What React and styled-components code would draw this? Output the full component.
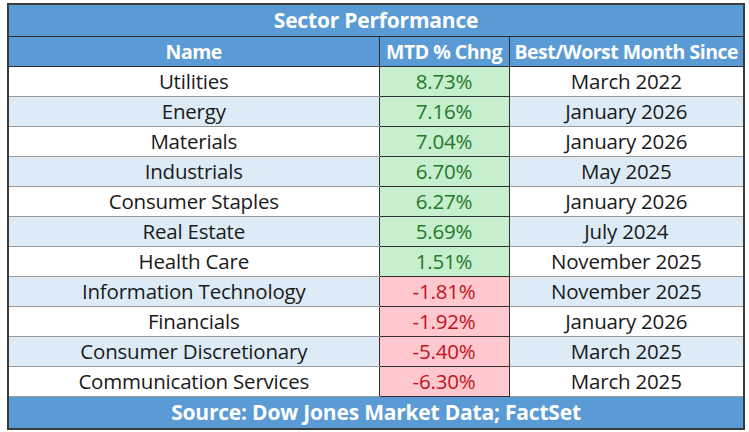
import React from 'react';
import styled, { createGlobalStyle } from 'styled-components';

const GlobalStyle = createGlobalStyle`
  body {
    margin: 0;
    background: #fff;
    font-family: 'Open Sans', 'Liberation Sans', sans-serif;
  }
`;

const Wrapper = styled.div`
  padding: 3px 6px 0 7px;
`;

const Table = styled.table`
  width: 736px;
  border-collapse: collapse;
  table-layout: fixed;
  border: 2px solid #3a3a3a;
`;

const Banner = styled.td`
  height: 31px;
  padding: 0;
  background: #5b9bd5;
  color: #fff;
  font-weight: 700;
  font-size: 21px;
  line-height: 1;
  text-align: center;
  border: 1px solid #2f2f2f;
  letter-spacing: -0.2px;
`;

const HeaderCell = styled.th`
  height: 29px;
  padding: 0;
  background: #5b9bd5;
  color: #fff;
  font-weight: 700;
  font-size: 19.5px;
  line-height: 1;
  text-align: center;
  white-space: nowrap;
  border: 1px solid #2f2f2f;
  letter-spacing: -0.5px;
`;

const tones = {
  up: { bg: '#c6efce', fg: '#24782a' },
  down: { bg: '#ffc7ce', fg: '#c0141e' },
};

const Cell = styled.td`
  height: 29px;
  padding: 0;
  text-align: center;
  font-size: 20.5px;
  line-height: 1;
  color: ${(p) => (p.$tone ? tones[p.$tone].fg : '#1a1a1a')};
  background: ${(p) =>
    p.$tone ? tones[p.$tone].bg : p.$striped ? '#ddebf7' : '#ffffff'};
  border: 1px solid #2f2f2f;
  border-top-color: ${(p) => (p.$tone ? '#2f2f2f' : '#9a9a9a')};
  border-bottom-color: ${(p) => (p.$tone ? '#2f2f2f' : '#9a9a9a')};
  letter-spacing: -0.2px;
`;

const rows = [
  ['Utilities', 8.73, 'March 2022'],
  ['Energy', 7.16, 'January 2026'],
  ['Materials', 7.04, 'January 2026'],
  ['Industrials', 6.7, 'May 2025'],
  ['Consumer Staples', 6.27, 'January 2026'],
  ['Real Estate', 5.69, 'July 2024'],
  ['Health Care', 1.51, 'November 2025'],
  ['Information Technology', -1.81, 'November 2025'],
  ['Financials', -1.92, 'January 2026'],
  ['Consumer Discretionary', -5.4, 'March 2025'],
  ['Communication Services', -6.3, 'March 2025'],
];

export default function App() {
  return (
    <Wrapper>
      <GlobalStyle />
      <Table>
        <colgroup>
          <col style={{ width: 371 }} />
          <col style={{ width: 130 }} />
          <col style={{ width: 235 }} />
        </colgroup>
        <thead>
          <tr>
            <Banner as="th" colSpan={3}>Sector Performance</Banner>
          </tr>
          <tr>
            <HeaderCell>Name</HeaderCell>
            <HeaderCell>MTD % Chng</HeaderCell>
            <HeaderCell>Best/Worst Month Since</HeaderCell>
          </tr>
        </thead>
        <tbody>
          {rows.map(([name, chg, since], i) => {
            const striped = i % 2 === 1;
            return (
              <tr key={name}>
                <Cell $striped={striped}>{name}</Cell>
                <Cell $tone={chg >= 0 ? 'up' : 'down'}>{chg.toFixed(2)}%</Cell>
                <Cell $striped={striped}>{since}</Cell>
              </tr>
            );
          })}
        </tbody>
        <tfoot>
          <tr>
            <Banner colSpan={3}>Source: Dow Jones Market Data; FactSet</Banner>
          </tr>
        </tfoot>
      </Table>
    </Wrapper>
  );
}
